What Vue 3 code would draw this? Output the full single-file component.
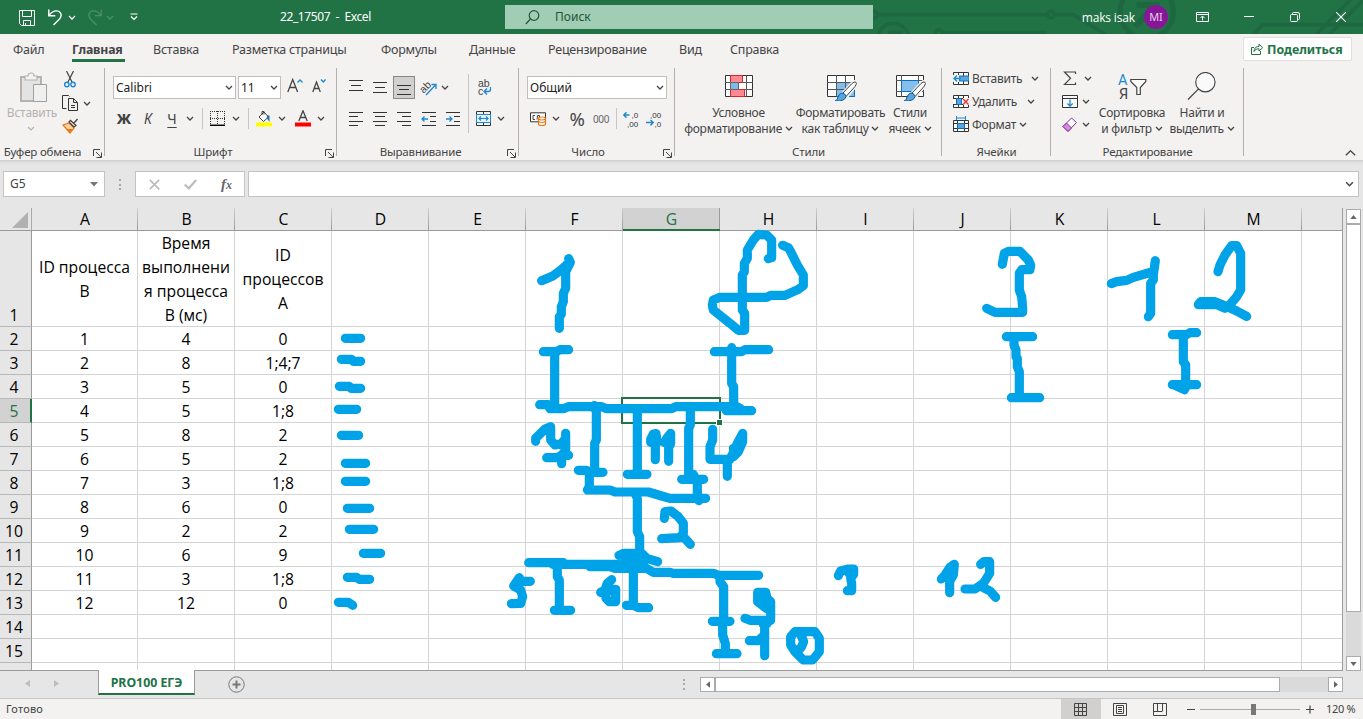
<script setup>
const tabs = ['Файл', 'Главная', 'Вставка', 'Разметка страницы', 'Формулы', 'Данные', 'Рецензирование', 'Вид', 'Справка']
const cols = ['A', 'B', 'C', 'D', 'E', 'F', 'G', 'H', 'I', 'J', 'K', 'L', 'M', '']
const data = [
  [['ID процесса', 'B'], ['Время', 'выполнени', 'я процесса', 'B (мс)'], ['ID', 'процессов', 'A']],
  [1, 4, '0'], [2, 8, '1;4;7'], [3, 5, '0'], [4, 5, '1;8'], [5, 8, '2'], [6, 5, '2'],
  [7, 3, '1;8'], [8, 6, '0'], [9, 2, '2'], [10, 6, '9'], [11, 3, '1;8'], [12, 12, '0'],
]
const lines = (r, c) => {
  const v = data[r - 1]?.[c]
  return v === undefined ? [] : Array.isArray(v) ? v : [v]
}
const launch = 'M.5 7V.5H7M3 3l5 5M8.500 3.500v5h-5'
const chev = 'M1 1l3 3 3-3'
</script>

<template>
  <div class="app">
    <header class="title">
      <svg class="circuit" width="503" height="34" viewBox="0 0 1509 102">
        <g fill="none" stroke="#1e6841" stroke-width="11">
          <path d="M55 44H560M586 44H640L735 102M250 98H560M1175 110L1208 74H1509M1370 102L1475 -5M1410 102L1509 0" />
          <circle cx="42" cy="44" r="10" /><circle cx="573" cy="44" r="10" /><circle cx="237" cy="99" r="10" />
          <circle cx="100" cy="117" r="47" />
          <circle cx="860" cy="36" r="80" stroke-width="16" />
          <path d="M830 15H890V75M885 20L825 80" stroke-width="18" />
          <path d="M85 98H122V120" stroke-width="14" />
        </g>
      </svg>
      <div class="quick">
        <svg width="16" height="16" viewBox="0 0 16 16" fill="none" stroke="#fff"><path d="M.5 .5h15v15h-13l-2-2zM3.500 .5v6h9v-6M4.500 15.500v-5h7v5M6.500 13v2" /></svg>
        <svg width="15" height="17" viewBox="0 0 15 17" fill="none" stroke="#fff" stroke-width="1.400"><path d="M.8 .5v6.200h6.500M1 6.500C5 .5 11 .8 12.800 4.500c1.200 3-.5 5-3 7.200L5.500 16" /></svg>
        <svg class="c1" width="8" height="5" viewBox="0 0 8 5" fill="none" stroke="#fff" stroke-width="1.300"><path :d="chev" /></svg>
        <svg width="15" height="17" viewBox="0 0 15 17" fill="none" stroke="#4b8f69" stroke-width="1.300"><path d="M14.200 .5v6.200H7.700M14 6.500C10 .5 4 .8 2.200 4.500c-1.200 3 .5 5 3 7.200L9.500 16" /></svg>
        <svg class="c1" width="8" height="5" viewBox="0 0 8 5" fill="none" stroke="#4b8f69" stroke-width="1.300"><path :d="chev" /></svg>
        <svg width="8" height="8" viewBox="0 0 8 8" fill="none" stroke="#fff" stroke-width="1.200"><path d="M.5 1h7M1 3.500l3 3 3-3" /></svg>
      </div>
      <div class="doc">22_17507&nbsp; -&nbsp; Excel</div>
      <div class="search">
        <svg width="15" height="15" viewBox="0 0 15 15" fill="none" stroke="#1d5636" stroke-width="1.200"><circle cx="9" cy="5.500" r="4.800" /><path d="M5.500 9L.8 14" /></svg>
        <span>Поиск</span>
      </div>
      <div class="user">maks isak</div>
      <div class="avatar">MI</div>
      <svg class="w1" width="13" height="10" viewBox="0 0 13 10" fill="none" stroke="#fff"><path d="M.5 .5h12v9H.5zM.5 2.500h12M6.500 8.500V4.500M4.500 6l2-2 2 2" /></svg>
      <svg class="w2" width="10" height="10" viewBox="0 0 10 10" stroke="#fff"><path d="M0 4.500h10" /></svg>
      <svg class="w3" width="10" height="10" viewBox="0 0 10 10" fill="none" stroke="#fff"><rect x=".5" y="2.500" width="7" height="7" rx="1" /><path d="M2.500 2V1.500q0-1 1-1H8q1.500 0 1.500 1.500v4.500q0 1-1 1" /></svg>
      <svg class="w4" width="10" height="10" viewBox="0 0 10 10" stroke="#fff" stroke-width="1.100"><path d="M0 0l10 10M10 0L0 10" /></svg>
    </header>

    <nav class="tabs">
      <span v-for="t in tabs" :key="t" class="tab" :class="{ on: t === 'Главная' }"><b>{{ t }}</b></span>
      <button class="share">
        <svg width="12" height="12" viewBox="0 0 12 12" fill="none" stroke="#217346"><path d="M3 4.500H.5v7h9V8M3 8.500c0-3.500 2-5 5-5V1l3.500 3.800L8 8V5.800C5.500 5.800 4 6.500 3 8.500z" /></svg>
        <span>Поделиться</span>
      </button>
    </nav>

    <section class="ribbon">
      <!-- Clipboard -->
      <div class="group g1">
        <div class="body">
          <div class="paste">
            <svg width="30" height="31" viewBox="0 0 30 31"><path d="M2 5h20v24H2z" fill="#e3e3e3" stroke="#b5b3b1" stroke-width="2" /><path d="M6 8V4h3c0-4 6-4 6 0h3v4z" fill="#f3f2f1" stroke="#b5b3b1" stroke-width="1.200" /><path d="M14.500 12.500h13v17h-13z" fill="#f0f0f0" stroke="#a19f9d" /></svg>
            <span>Вставить</span>
            <svg width="8" height="5" viewBox="0 0 8 5" fill="none" stroke="#b5b3b1" stroke-width="1.200"><path :d="chev" /></svg>
          </div>
          <div class="clip">
            <svg width="12" height="17" viewBox="0 0 12 17" fill="none" stroke="#444"><path d="M2.500 0L8 11M9.500 0L4 11" stroke-width="1.200" /><circle cx="2.800" cy="13.500" r="2.200" stroke="#1e88d0" stroke-width="1.400" /><circle cx="9" cy="13.500" r="2.200" stroke="#1e88d0" stroke-width="1.400" /></svg>
            <div class="copy">
              <svg width="17" height="16" viewBox="0 0 17 16" fill="none" stroke="#333"><path d="M4.500 13.500h-4V.5h6l1 1M6.500 3.500h5l4 4v8h-9zM11.500 3.500v4h4M9 10.500h4M9 12.500h4" /></svg>
              <svg width="8" height="5" viewBox="0 0 8 5" fill="none" stroke="#444" stroke-width="1.300"><path :d="chev" /></svg>
            </div>
            <svg width="17" height="16" viewBox="0 0 17 16"><path d="M1 7l6-2 5 5-4 5z" fill="#fbd3a5" stroke="#e8750f" stroke-width="1.200" /><path d="M4 11l4 3 3-3" fill="#e8750f" /><path d="M7 4l5 5 2-1.500L8.500 2.500zM12 5l3.500-4" fill="#fff" stroke="#444" stroke-width="1.300" /></svg>
          </div>
        </div>
        <footer><span>Буфер обмена</span><svg class="launch" width="9" height="9" viewBox="0 0 9 9"><path :d="launch" /></svg></footer>
      </div>

      <!-- Font -->
      <div class="group g2">
        <div class="body col">
          <div class="r1">
            <div class="combo cf"><span>Calibri</span><svg width="8" height="5" viewBox="0 0 8 5"><path :d="chev" /></svg></div>
            <div class="combo cs"><span>11</span><svg width="8" height="5" viewBox="0 0 8 5"><path :d="chev" /></svg></div>
            <svg class="big" width="16" height="15" viewBox="0 0 16 15" fill="none"><path d="M.8 14L5.700 1.500 10.600 14M2.500 9.500h6.500" stroke="#444" stroke-width="1.300" /><path d="M10.500 4.500L13 2l2.500 2.500" stroke="#1e88d0" stroke-width="1.300" /></svg>
            <svg class="small" width="14" height="15" viewBox="0 0 14 15" fill="none"><path d="M.8 14L4.500 4 8.300 14M2 10.500h5" stroke="#444" stroke-width="1.300" /><path d="M9 1.500L11.300 4l2.200-2.500" stroke="#1e88d0" stroke-width="1.300" /></svg>
          </div>
          <div class="r2">
            <span class="bold">Ж</span><span class="ital">К</span><span class="und">Ч</span>
            <svg class="ch" width="8" height="5" viewBox="0 0 8 5"><path :d="chev" /></svg><i class="sep"></i>
            <svg width="15" height="15" viewBox="0 0 15 15" fill="none" stroke="#333"><path d="M.5 0v13M14.500 0v13M0 .5h15M7.500 0v13M0 7.500h15" stroke-dasharray="1 1" /><path d="M0 14.300h15" stroke-width="1.500" stroke="#000" /></svg>
            <svg class="ch" width="8" height="5" viewBox="0 0 8 5"><path :d="chev" /></svg><i class="sep"></i>
            <svg width="16" height="17" viewBox="0 0 16 17"><path d="M3 7l5-5 4.500 5L7.500 11.500zM6 5V1.500h2v3" fill="#fafafa" stroke="#444" /><path d="M11 5.500h2.500V12L10.800 8z" fill="#1e6fb0" /><path d="M0 12.500h16v4H0z" fill="#ff0" /></svg>
            <svg class="ch" width="8" height="5" viewBox="0 0 8 5"><path :d="chev" /></svg>
            <svg width="16" height="17" viewBox="0 0 16 17"><path d="M3.800 11L8 .8 12.200 11M5.300 7.500h5.400" fill="none" stroke="#444" stroke-width="1.300" /><path d="M0 12.500h16v4H0z" fill="#f00" /></svg>
            <svg class="ch" width="8" height="5" viewBox="0 0 8 5"><path :d="chev" /></svg>
          </div>
        </div>
        <footer><span>Шрифт</span><svg class="launch" width="9" height="9" viewBox="0 0 9 9"><path :d="launch" /></svg></footer>
      </div>

      <!-- Alignment -->
      <div class="group g3">
        <div class="body">
          <div class="align">
            <svg class="ln up" width="14" height="11" viewBox="0 0 14 11"><path d="M0 .5h14M2 5.500h10M0 10.500h14" /></svg>
            <svg class="ln" width="14" height="11" viewBox="0 0 14 11"><path d="M0 .5h14M2 5.500h10M0 10.500h14" /></svg>
            <div class="sel"><svg class="ln" width="14" height="10" viewBox="0 0 14 10"><path d="M0 .5h14M2 4.500h10M0 9.500h14" /></svg></div>
            <svg width="18" height="17" viewBox="0 0 18 17"><text x="0" y="12" transform="rotate(-45 5 9)" class="abt">ab</text><path d="M6 16L16 5.500M11.500 5.500h4.500v4.500" fill="none" stroke="#1e88d0" stroke-width="1.300" /></svg>
            <svg class="ch" width="8" height="5" viewBox="0 0 8 5"><path :d="chev" /></svg>
            <svg class="ln" width="14" height="14" viewBox="0 0 14 14"><path d="M0 .5h14M0 4.500h9M0 9.500h14M0 13.500h9" /></svg>
            <svg class="ln" width="14" height="14" viewBox="0 0 14 14"><path d="M0 .5h14M2 4.500h10M0 9.500h14M2 13.500h10" /></svg>
            <svg class="ln" width="14" height="14" viewBox="0 0 14 14"><path d="M0 .5h14M5 4.500h9M0 9.500h14M5 13.500h9" /></svg>
            <svg class="ln" width="14" height="14" viewBox="0 0 14 14"><path d="M0 .5h14M8 4.500h6M8 9.500h6M0 13.500h14" /><path class="blue" d="M0 7h6M2.500 4.500L0 7l2.500 2.500" /></svg>
            <svg class="ln" width="14" height="14" viewBox="0 0 14 14"><path d="M0 .5h14M8 4.500h6M8 9.500h6M0 13.500h14" /><path class="blue" d="M0 7h6M3.500 4.500L6 7 3.500 9.500" /></svg>
          </div>
          <i class="sep tall"></i>
          <div class="wrap">
            <svg width="14" height="17" viewBox="0 0 14 17"><text x="0" y="7.500" class="abc">ab</text><text x="0" y="16" class="abc">c</text><path d="M12.500 8v2.500q0 2-2 2H6.500M9 9.500l-3 3 3 3" fill="none" stroke="#1e88d0" stroke-width="1.300" /></svg>
            <div class="merge">
              <svg width="15" height="15" viewBox="0 0 15 15" fill="none"><path d="M.5 .5h14v14H.5zM7.500 0v3M7.500 12v3" stroke="#333" /><path d="M.5 3.500h14v8H.5z" fill="#e9f3fb" stroke="#1e88d0" /><path d="M3 7.500h9M5 5.500l-2 2 2 2M10 5.500l2 2-2 2" stroke="#1e88d0" stroke-width="1.200" /></svg>
              <svg class="ch" width="8" height="5" viewBox="0 0 8 5"><path :d="chev" /></svg>
            </div>
          </div>
        </div>
        <footer><span>Выравнивание</span><svg class="launch" width="9" height="9" viewBox="0 0 9 9"><path :d="launch" /></svg></footer>
      </div>

      <!-- Number -->
      <div class="group g4">
        <div class="body col">
          <div class="combo cn"><span>Общий</span><svg width="8" height="5" viewBox="0 0 8 5"><path :d="chev" /></svg></div>
          <div class="num">
            <svg width="17" height="14" viewBox="0 0 17 14"><path d="M.5 .8h15v9H.5z" fill="#fff" stroke="#333" /><path d="M5 3.500H3v4h2M7 7.500l.5-4h2v3" fill="none" stroke="#444" /><path d="M8.500 6.500c0-2 7-2 7 0V12c0 2-7 2-7 0z" fill="#fff" stroke="#e8750f" stroke-width="1.200" /><path d="M8.500 7q3.500 2 7 0M8.500 9.500q3.500 2 7 0" fill="none" stroke="#e8750f" stroke-width="1.200" /></svg>
            <svg class="ch" width="8" height="5" viewBox="0 0 8 5"><path :d="chev" /></svg>
            <span class="pct">%</span><span class="ooo">000</span><i class="sep"></i>
            <svg width="16" height="16" viewBox="0 0 16 16"><text x="8.500" y="6.500" class="dz">,0</text><text x="4" y="15.500" class="dz">,00</text><path d="M6.500 4H.8M3.500 1.300L.8 4l2.700 2.700" fill="none" stroke="#1e88d0" stroke-width="1.400" /></svg>
            <svg width="16" height="16" viewBox="0 0 16 16"><text x="4" y="6.500" class="dz">,00</text><text x="8.500" y="15.500" class="dz">,0</text><path d="M0 11.500h7M4.500 9l2.700 2.500L4.500 14.500" fill="none" stroke="#1e88d0" stroke-width="1.400" /></svg>
          </div>
        </div>
        <footer><span>Число</span><svg class="launch" width="9" height="9" viewBox="0 0 9 9"><path :d="launch" /></svg></footer>
      </div>

      <!-- Styles -->
      <div class="group g5">
        <div class="body">
          <div class="large l1">
            <svg width="30" height="29" viewBox="0 0 30 29"><path d="M1.500 3.500h27v21h-27z" fill="#fff" stroke="#333" /><path d="M6.500 3v22M22.500 3v22M1 10.500h28M1 17.500h28M14.500 3v22" stroke="#555" fill="none" /><path d="M6.500 3.500h12v7h-12zM6.500 17.500h14v7h-14z" fill="#ff8a92" stroke="#d6262d" /><path d="M6.500 10.500h8v7h-8z" fill="#7db9ea" stroke="#666" /></svg>
            <span>Условное</span>
            <span>форматирование <svg class="ch" width="8" height="5" viewBox="0 0 8 5"><path :d="chev" /></svg></span>
          </div>
          <div class="large l2">
            <svg width="32" height="29" viewBox="0 0 32 29"><path d="M2.500 3.500h27v21h-27z" fill="#fff" stroke="#333" /><path d="M11.500 10.500h18v14h-18z" fill="#83beec" stroke="#0a6fc0" /><path d="M11.500 3v22M20.500 3v22M2 10.500h28M2 17.500h28" stroke="#555" fill="none" /><path d="M31.500 9.500q1.500 1-.5 4l-9 11-4-3.500 9-10q3-2.500 4.500-1.500z" fill="#fff" stroke="#f3f2f1" stroke-width="3" /><path d="M30.800 10.200q1.500 1-.5 4l-9 10-3.500-3 9-9.500q2.500-2.500 4-1.500z" fill="#fff" stroke="#444" /><path d="M17 21q3 0 4 3.500-1 5-11 4.500 3-1 3-4 1-3.500 4-4z" fill="#5ba5dd" stroke="#0a5ea8" /></svg>
            <span>Форматировать</span>
            <span>как таблицу <svg class="ch" width="8" height="5" viewBox="0 0 8 5"><path :d="chev" /></svg></span>
          </div>
          <div class="large l3">
            <svg width="32" height="29" viewBox="0 0 32 29"><path d="M2.500 3.500h27v21h-27z" fill="#fff" stroke="#333" /><path d="M7.500 3v22M24.500 3v22M2 8.500h28M2 19.500h28" stroke="#555" fill="none" /><path d="M7.500 8.500h17v11h-17z" fill="#83beec" stroke="#0a6fc0" /><path d="M31.500 9.500q1.500 1-.5 4l-9 11-4-3.500 9-10q3-2.500 4.500-1.500z" fill="#fff" stroke="#f3f2f1" stroke-width="3" /><path d="M30.800 10.200q1.500 1-.5 4l-9 10-3.500-3 9-9.500q2.500-2.500 4-1.500z" fill="#fff" stroke="#444" /><path d="M17 21q3 0 4 3.500-1 5-11 4.500 3-1 3-4 1-3.500 4-4z" fill="#5ba5dd" stroke="#0a5ea8" /></svg>
            <span>Стили</span>
            <span>ячеек <svg class="ch" width="8" height="5" viewBox="0 0 8 5"><path :d="chev" /></svg></span>
          </div>
        </div>
        <footer><span>Стили</span></footer>
      </div>

      <!-- Cells -->
      <div class="group g6">
        <div class="body col">
          <div class="line">
            <svg width="16" height="15" viewBox="0 0 16 15"><path d="M.5 4V1.500h15v12H.5V11M5.500 1v12M10.500 1v12M0 5.500h16M0 9.500h16" fill="#fff" stroke="#333" /><path d="M6 5h10v5H6z" fill="#5ba5dd" stroke="#0a6fc0" /><path d="M0 4h6v7H0z" fill="#f3f2f1" /><path d="M8 7.500H1M4 4.500l-3 3 3 3" fill="none" stroke="#1e88d0" stroke-width="1.400" /></svg>
            <span>Вставить</span><svg class="ch m1" width="8" height="5" viewBox="0 0 8 5"><path :d="chev" /></svg>
          </div>
          <div class="line">
            <svg width="16" height="15" viewBox="0 0 16 15"><path d="M.5 4V1.500h15v12H.5V11M5.500 1v12M10.500 1v12M0 4.500h16M0 10.500h16" fill="#fff" stroke="#333" /><path d="M3.500 4.500h5v6h-5z" fill="#5ba5dd" stroke="#0a6fc0" /><path d="M10 4h6v7h-6z" fill="#f3f2f1" /><path d="M10 5l5.500 5.500M15.500 5L10 10.500" stroke="#e8333a" stroke-width="1.400" /></svg>
            <span>Удалить</span><svg class="ch m2" width="8" height="5" viewBox="0 0 8 5"><path :d="chev" /></svg>
          </div>
          <div class="line">
            <svg width="16" height="17" viewBox="0 0 16 17"><path d="M.5 4.500h15v11H.5zM4.500 4v12M11.500 4v12M0 7.500h16M0 12.500h16" fill="#fff" stroke="#333" /><path d="M4.500 7.500h7v5h-7z" fill="#5ba5dd" stroke="#0a6fc0" /><path d="M3 0h10v4H3z" fill="#f3f2f1" /><path d="M3.500 0v4M12.500 0v4M4 2h8" fill="none" stroke="#1e88d0" /></svg>
            <span>Формат</span><svg class="ch m3" width="8" height="5" viewBox="0 0 8 5"><path :d="chev" /></svg>
          </div>
        </div>
        <footer><span>Ячейки</span></footer>
      </div>

      <!-- Editing -->
      <div class="group g7">
        <div class="body">
          <div class="edit">
            <svg width="16" height="15" viewBox="0 0 16 15" fill="none"><path d="M13.500 3V1H2.500l6 6.300-6 6.200h11v-2" stroke="#444" stroke-width="1.200" /></svg>
            <svg class="ch r" width="8" height="5" viewBox="0 0 8 5"><path :d="chev" /></svg>
            <svg width="16" height="15" viewBox="0 0 16 15" fill="none"><path d="M.5 1.500h15v12H.5zM.5 4.500h15" stroke="#333" fill="#fafafa" /><path d="M8 5.500v6.500M5.300 9.500L8 12l2.700-2.500" stroke="#1e88d0" stroke-width="1.300" /></svg>
            <svg class="ch" width="8" height="5" viewBox="0 0 8 5"><path :d="chev" /></svg>
            <svg width="16" height="16" viewBox="0 0 16 16"><path d="M1 9.500L9.500 1l5 4.500-8.500 9z" fill="#fff" stroke="#8c2fa0" /><path d="M1 9.500L4.500 6l5 5-3.500 3.500z" fill="#cf8fdc" stroke="#8c2fa0" /></svg>
            <svg class="ch" width="8" height="5" viewBox="0 0 8 5"><path :d="chev" /></svg>
          </div>
          <div class="large l4">
            <svg width="29" height="29" viewBox="0 0 29 29" fill="none"><text x="0" y="12.500" class="sa">А</text><text x="1" y="27" class="sy">Я</text><path d="M12.800 7.500h15v2l-5.500 6v7h-3.500v-7l-6-6z" stroke="#444" stroke-width="1.200" fill="#fafafa" /></svg>
            <span>Сортировка</span>
            <span>и фильтр <svg class="ch" width="8" height="5" viewBox="0 0 8 5"><path :d="chev" /></svg></span>
          </div>
          <div class="large l5">
            <svg width="30" height="30" viewBox="0 0 30 30"><circle cx="18.500" cy="10.500" r="10" fill="#fafafa" stroke="#444" stroke-width="1.200" /><path d="M11.500 17.500L.5 28.500" stroke="#444" stroke-width="1.300" /></svg>
            <span>Найти и</span>
            <span>выделить <svg class="ch" width="8" height="5" viewBox="0 0 8 5"><path :d="chev" /></svg></span>
          </div>
        </div>
        <footer><span>Редактирование</span></footer>
      </div>
      <svg class="collapse" width="11" height="6" viewBox="0 0 11 6" fill="none" stroke="#444" stroke-width="1.300"><path d="M.8 5.300L5.500 .8l4.700 4.500" /></svg>
    </section>

    <section class="fbar">
      <div class="name"><span>G5</span><svg width="8" height="5" viewBox="0 0 8 5"><path d="M0 0h8L4 4.500z" fill="#777" /></svg></div>
      <i class="dots"></i>
      <div class="fx">
        <svg width="11" height="11" viewBox="0 0 11 11" stroke="#bdbdbd" stroke-width="1.700"><path d="M.8 .8l9.500 9.500M10.200 .8L.8 10.200" /></svg>
        <svg width="13" height="11" viewBox="0 0 13 11" fill="none" stroke="#bdbdbd" stroke-width="2.200"><path d="M.8 5.500L4.800 9.300 12.200 1" /></svg>
        <em>f<small>x</small></em>
      </div>
      <div class="formula"><svg class="ch" width="9" height="6" viewBox="0 0 8 5"><path :d="chev" /></svg></div>
    </section>

    <main class="work">
      <div class="sheet">
        <div class="hrow">
          <div class="corner"><svg width="16" height="16" viewBox="0 0 16 16"><path d="M16 0v16H0z" fill="#b1b1b1" /></svg></div>
          <div v-for="(c, i) in cols" :key="i" class="hc" :class="{ a: i === 0, act: c === 'G', last: i === 13 }">{{ c }}</div>
        </div>
        <div v-for="r in 16" :key="r" class="row" :class="{ first: r === 1, part: r === 16 }">
          <div class="rh" :class="{ act: r === 5 }">{{ r < 16 ? r : '' }}</div>
          <div v-for="(c, i) in cols" :key="i" class="cell" :class="{ a: i === 0, last: i === 13 }">
            <span v-for="l in lines(r, i)" :key="l">{{ l }}</span>
          </div>
        </div>
        <svg class="ink" width="1342" height="462" viewBox="0 208 1342 462">
          <rect x="622" y="398" width="98" height="25" fill="none" stroke="#217346" stroke-width="2" />
          <rect x="716.500" y="419.500" width="6" height="6" fill="#217346" stroke="#fff" />
          <g class="pen">
            <g transform="translate(500 225) scale(.33333)">
              <path d="M125 167L160 152 185 133 208 112M206 101L211 112 197 140V190L190 205V230L184 245V268L178 275V310" />
              <path d="M805 101L815 98V45L800 30 775 28 760 45 742 75V100L733 115V140L727 150V255L734 265V316H715L690 295 640 255 637 240 640 225 660 217H800L812 211H855L895 193 910 182V150L892 120 872 80 865 68 848 61" />
              <path d="M130 380H170L180 374H206M164 380V540M643 380H725L735 374H806M695 368V475L701 485V540" />
              <path d="M119 539H145L150 551H190L205 545H305L320 551H515L527 545H700M679 557H755M701 540L720 550M283 542V550" />
            </g>
            <g transform="translate(500 390) scale(.33333)">
              <path d="M289 50V150L284 160V235M235 241H260L270 247H309M268 250V290L262 300H330L345 306H445L465 312 485 318 510 325H617" />
              <path d="M412 60V250M382 253H441M571 55V105L566 115V260M545 268H611M580 253L592 275V310L597 332" />
              <path d="M107 154V145L135 117 152 110V150L165 165 185 160 197 145V130M197 145V180L185 196V221M140 203H170L185 196H206" />
              <path d="M452 157V148L460 132 468 131 466 160V209M494 158L500 145 512 130V160L506 172V214M470 140V160M508 140V165" />
              <path d="M638 118V150L630 170V208H690L700 188 712 160 728 130V155L715 185 700 200M682 208V259M700 175L715 180" />
              <path d="M405 310L412 325V425L419 440V490M357 496L370 490H425L440 505 473 515" />
              <path d="M86 518H190M158 523H380M270 530H330L345 535H440L460 547H510L520 550H640L655 556H776M370 505L430 512V530H360" />
              <path d="M172 530V560L178 570V655M163 661H212M400 540V645M379 646H400L415 653H446" />
              <path d="M660 560V575L671 590V680L668 700V735L676 760V780M637 694H690M649 791H711" />
              <path d="M91 574H60L58 563 41 588 62 600 68 620 62 640 34 641" />
              <path d="M335 569L322 580 315 600 302 607M318 600V625L328 635H347V598L330 597M318 605L335 600" />
              <path d="M773 607H797L801 625 812 635V685L800 702 790 703M773 607V635L800 656M788 620L800 645M735 685L750 691H812M794 691V797M748 752H775L794 735" />
              <path d="M885 725H945L958 745V785L938 810H910L885 785 872 765V740L885 725M903 735L911 755 905 770 892 785" />
              <path d="M493 385L495 365 513 363 535 380 550 400V430L540 443 485 446M550 440L571 463" />
            </g>
            <g transform="translate(820 225) scale(.33333)">
              <path d="M547 118L553 85 565 79H600L625 105 632 120 630 134H605L598 145V195L605 215 608 250V262H525L500 250" />
              <path d="M874 176L890 170 920 166 940 157 985 144 1000 140M1006 107L1000 150V165L992 175V265L985 275" />
              <path d="M1194 140L1200 120 1215 90 1235 62H1250L1262 85V195L1250 215 1232 236M1135 239L1142 230H1185L1215 242 1250 258 1280 274M1135 239H1190L1215 250" />
              <path d="M559 335H638M582 340V360L588 375V395L592 400V425L598 440V515M574 518H659M1057 329H1100L1110 323H1130M1090 335V410L1097 420V480M1057 479H1130M1065 481L1093 494 1098 485" />
              <path d="M55 1052L62 1038 85 1032H101V1048L92 1060 95 1075V1097H82M80 1035L95 1055" />
              <path d="M364 1062L375 1050 390 1027 403 1018 400 1050 389 1068V1103M380 1055L395 1040M482 1018L492 1010H509V1045L490 1075 465 1092H435M490 1088L510 1098 527 1117" />
            </g>
            <g transform="translate(320 320) scale(.33333)">
              <path d="M76 55H122M64 118H95L100 124H122M58 199H88L93 205H122M55 268H110M64 346H116M76 430H137M76 484H137M82 565H149M88 628H161M130 700H182M82 772H110L118 778H149M55 847H85L98 856" />
            </g>
          </g>
        </svg>
      </div>
      <div class="vbar">
        <div class="sb"><svg width="7" height="4" viewBox="0 0 8 5"><path d="M0 5h8L4 0z" /></svg></div>
        <div class="vthumb"></div><div class="vtrack"></div>
        <div class="sb"><svg width="7" height="4" viewBox="0 0 8 5"><path d="M0 0h8L4 5z" /></svg></div>
      </div>
    </main>

    <section class="sheets">
      <div class="arrows"><svg width="5" height="7" viewBox="0 0 5 7"><path d="M5 0v7L0 3.500z" /></svg><svg width="5" height="7" viewBox="0 0 5 7"><path d="M0 0v7l5-3.500z" /></svg></div>
      <div class="stab">PRO100 ЕГЭ</div>
      <svg class="plus" width="17" height="17" viewBox="0 0 17 17" fill="none" stroke="#777"><circle cx="8.500" cy="8.500" r="7.700" /><path d="M8.500 4.500v8M4.500 8.500h8" stroke-width="2" /></svg>
      <i class="dots"></i>
      <div class="hbar">
        <div class="sb"><svg width="4" height="7" viewBox="0 0 5 8"><path d="M5 0v8L0 4z" /></svg></div>
        <div class="hthumb"></div><div class="htrack"></div>
        <div class="sb"><svg width="4" height="7" viewBox="0 0 5 8"><path d="M0 0v8l5-4z" /></svg></div>
      </div>
    </section>

    <footer class="status">
      <span class="ready">Готово</span>
      <div class="view on"><svg width="13" height="13" viewBox="0 0 13 13"><path d="M.5 .5h12v12H.5zM4.500 0v13M8.500 0v13M0 4.500h13M0 8.500h13" /></svg></div>
      <div class="view"><svg width="14" height="13" viewBox="0 0 14 13"><path d="M.5 .5h13v12H.5zM3.500 2.500h7v8h-7zM5 4.500h4M5 6.500h4M5 8.500h4" /></svg></div>
      <div class="view"><svg width="14" height="13" viewBox="0 0 14 13"><path d="M.5 .5h13v12H.5zM4.500 0v8M9.500 0v8M.5 8.500h9" /></svg></div>
      <div class="zoom">
        <svg width="127" height="11" viewBox="0 0 127 11"><path d="M0 5.500h8M119 5.500h8M123 1.500v8" stroke="#444" stroke-width="1.200" /><path d="M13 5.500h100" stroke="#aaa" /><path d="M64 0h5v11h-5z" fill="#777" /></svg>
        <span>120 %</span>
      </div>
    </footer>
  </div>
</template>

<style>
body { background: #e6e6e6; overflow: hidden; }
</style>

<style scoped>
* { box-sizing: border-box; }
.app { width: 1363px; height: 719px; display: flex; flex-direction: column; overflow: hidden; background: #e6e6e6; color: #444; font: 12px/16px "Noto Sans", "Open Sans", sans-serif; }
svg { flex: none; display: block; }
.title { height: 34px; flex: none; background: #217346; position: relative; display: flex; align-items: center; color: #fff; }
.circuit { position: absolute; right: 0; top: 0; }
.title > :not(.circuit) { position: relative; }
.quick { display: flex; align-items: center; width: 280px; padding-left: 19px; gap: 4px; }
.quick svg:nth-child(1) { margin-right: 9px; margin-top: 2px; }
.quick svg:nth-child(2) { margin-right: 1px; }
.quick svg:nth-child(3) { margin-right: 7px; }
.quick svg:nth-child(5) { margin-right: 12px; }
.doc { width: 225px; font-size: 12px; letter-spacing: -.4px; white-space: nowrap; }
.search { width: 368px; height: 24px; background: #a0cdb4; display: flex; align-items: center; padding-left: 20px; gap: 15px; color: #1d5636; }
.user { width: 271px; padding-right: 9px; text-align: right; font: 12px/16px "Open Sans", sans-serif; margin-top: 2px; letter-spacing: -.15px; }
.avatar { width: 24px; height: 24px; border-radius: 50%; background: #881798; font-size: 11px; line-height: 24px; text-align: center; color: #e8d0ee; }
.w1 { margin-left: 28px; } .w2 { margin-left: 35px; } .w3 { margin-left: 36px; } .w4 { margin-left: 36px; }

.tabs { height: 32px; flex: none; background: #f3f2f1; display: grid; grid-template-columns: 59px 81px 79px 149px 88px 79px 131px 51px 513px auto; padding-left: 13px; }
.tab { white-space: nowrap; padding-top: 7px; font-size: 12.500px; line-height: 17px; letter-spacing: -.22px; }
.tab b { font-weight: 400; display: inline-block; height: 21px; }
.tab.on b { font-weight: 700; width: 53px; border-bottom: 3px solid #217346; letter-spacing: -.15px; font-size: 12.300px; }
.share { width: 109px; height: 24px; margin-top: 3px; background: #fff; border: 1px solid #e1dfdd; border-radius: 2px; display: flex; align-items: center; gap: 4px; padding: 0 0 0 7px; color: #217346; font: 700 12.400px "Noto Sans", sans-serif; white-space: nowrap; }

.ribbon { height: 99px; flex: none; display: flex; background: linear-gradient(#f3f2f1 0 94px, #cdcdcd 94px, #e2e2e2 97px, #e6e6e6); letter-spacing: -.25px; }
.group { height: 94px; padding-top: 2px; display: flex; flex-direction: column; background: linear-gradient(#b3b0ad, #b3b0ad) 100% 2px / 1px 88px no-repeat; }
.g1 { width: 105px; } .g2 { width: 232px; } .g3 { width: 182px; } .g4 { width: 156px; } .g5 { width: 267px; } .g6 { width: 109px; } .g7 { width: 193px; }
.body { height: 76px; flex: none; display: flex; }
.body.col { flex-direction: column; }
.group footer { height: 16px; display: flex; font-size: 11.500px; line-height: 16px; letter-spacing: -.17px; justify-content: center; position: relative; white-space: nowrap; }
.launch { position: absolute; right: 3px; top: 5px; fill: none; stroke: #444; }
.g1 footer { padding-right: 20px; } .g2 footer { padding-right: 16px; } .g3 footer { padding-right: 15px; } .g4 footer { padding-right: 18px; }
.ch, .combo svg { fill: none; stroke: #444; stroke-width: 1.300; }
.sep { width: 1px; height: 21px; background: #c8c6c4; }
.paste { width: 62px; padding-top: 4px; display: flex; flex-direction: column; align-items: center; color: #b5b3b1; }
.paste svg:first-child { margin-left: 6px; }
.paste span { line-height: 16px; margin: 2px 0 5px 2px; }
.clip { padding-top: 3px; display: flex; flex-direction: column; gap: 7px; }
.clip > svg:first-child { margin-left: 2px; }
.copy { display: flex; align-items: center; gap: 4px; }
.g2 .body, .g4 .body { padding: 8px 0 0 8px; }
.combo { height: 23px; border: 1px solid #c0bebc; background: #fff; color: #222; display: flex; align-items: center; justify-content: space-between; padding: 0 2px; letter-spacing: 0; }
.cf { width: 123px; } .cs { width: 43px; margin-left: 2px; } .cn { width: 140px; }
.r1 { display: flex; }
.big { margin: 2px 0 0 6px; } .small { margin: 2px 0 0 9px; }
.r2 { height: 21px; margin-top: 9px; display: grid; grid-template-columns: 22px 26px 22px 14px 11px 19px 17px 9px 22px 14px 28px 7px; place-items: center; }
.r2 span { font-size: 14px; line-height: 18px; letter-spacing: 0; }
.bold { font-weight: 800; } .ital { font-style: italic; } .und { text-decoration: underline; text-underline-offset: 3px; }
.ln { fill: none; stroke: #333; stroke-width: 1.100; } .ln .blue { stroke: #1e88d0; stroke-width: 1.300; }
.align { padding: 8px 0 0 7px; display: grid; grid-template-columns: 24px 24px 24px 25px 23px; grid-template-rows: 23px 43px; place-items: center; }
.align > :nth-child(n+6) { align-self: start; margin-top: 13px; }
.align .up { margin-top: -5px; }
.align svg, .wrap svg, .num svg { overflow: visible; }
.align .ch { justify-self: start; margin-left: 0; }
.sel { width: 22px; height: 23px; border: 1px solid #8a8886; background: #d2d0ce; display: grid; place-items: center; padding-top: 5px; }
.abt, .abc { font: 10.500px "Liberation Sans", sans-serif; fill: #444; letter-spacing: 0; }
.dz { font: 8px "Liberation Sans", sans-serif; fill: #333; letter-spacing: 0; }
.tall { height: 59px; margin: 6px 0 0 4px; }
.wrap { padding: 11px 0 0 7px; display: flex; flex-direction: column; gap: 15px; }
.wrap > svg { margin-left: 2px; }
.merge { display: flex; align-items: center; gap: 6px; }
.num { margin-top: 9px; height: 21px; display: grid; grid-template-columns: 22px 14px 28px 20px 10px 20px 26px; place-items: center; }
.pct { font-size: 18.500px; line-height: 20px; } .ooo { font-size: 10px; color: #666; letter-spacing: -.4px; }
.large { display: flex; flex-direction: column; align-items: center; white-space: nowrap; padding-top: 4px; }
.large > svg { height: 29px; margin-bottom: 4px; }
.large .ch { display: inline-block; vertical-align: 2px; }
.l1 { width: 127px; } .l2 { width: 77px; } .l3 { width: 62px; }
.g6 .body { padding: 0 0 0 11px; margin-top: -1px; margin-bottom: 1px; }
.line { height: 23px; display: flex; align-items: center; gap: 3px; }
.m1 { margin-left: 6px; } .m2 { margin-left: 7px; } .m3 { margin-left: 0; }
.edit { width: 41px; margin-top: -1px; padding: 0 0 0 11px; display: grid; grid-template-columns: 20px 8px; grid-template-rows: 23px 23px 23px; align-items: center; }
.edit .r { margin-left: 2px; }
.l4 { width: 80px; } .l5 { width: 60px; }
.sa, .sy { font: 14.500px Roboto, sans-serif; fill: #1e88d0; letter-spacing: 0; } .sy { fill: #444; }
.collapse { margin: 84px 0 0 101px; }

.fbar { height: 43px; flex: none; padding-top: 6px; display: flex; background: #e6e6e6; }
.name, .fx, .formula { height: 26px; background: #fff; border: 1px solid #c3c3c3; display: flex; align-items: center; }
.name { width: 102px; margin-left: 3px; padding: 0 6px; justify-content: space-between; }
.dots { width: 2px; height: 11px; margin: 8px 14px 0; background: repeating-linear-gradient(#a8a8a8 0 2px, transparent 2px 4.500px); }
.fx { width: 110px; padding-left: 13px; }
.fx svg:nth-child(2) { margin-left: 24px; }
.fx em { font: italic bold 15px/18px "Liberation Serif", serif; margin-left: 24px; color: #666; } .fx small { font-size: 12px; }
.formula { width: 1111px; margin-left: 3px; justify-content: flex-end; padding-right: 4px; }

.work { height: 463px; flex: none; display: flex; }
.sheet { width: 1343px; height: 463px; position: relative; overflow: hidden; border-right: 1px solid #9b9b9b; border-bottom: 1px solid #9b9b9b; background: #fff; color: #000; font: 15.700px/24px "Open Sans", sans-serif; }
.hrow { height: 23px; display: flex; background: #e6e6e6; border-bottom: 1px solid #9b9b9b; }
.corner { width: 32px; flex: none; padding: 4px 0 0 12px; border-right: 1px solid #ababab; }
.hc { width: 97px; flex: none; height: 22px; line-height: 22px; text-align: center; background: linear-gradient(#cfcfcf, #9b9b9b) right / 1px 100% no-repeat; }
.hc.act { background: linear-gradient(#9b9b9b, #9b9b9b) right / 1px 100% no-repeat, #d2d2d2; color: #217346; height: 23px; border-bottom: 2px solid #217346; }
.a { width: 106px !important; }
.row { height: 24px; display: flex; }
.row.first { height: 96px; }
.rh { width: 32px; flex: none; background: #e6e6e6; border-right: 1px solid #9b9b9b; border-bottom: 1px solid #b8b8b8; display: flex; align-items: flex-end; justify-content: center; padding-right: 3px; line-height: 21px; }
.rh.act { background: #d2d2d2; color: #217346; border-right: 2px solid #217346; padding-right: 2px; }
.cell { width: 97px; flex: none; border-right: 1px solid #d4d4d4; border-bottom: 1px solid #d4d4d4; display: flex; flex-direction: column; justify-content: center; align-items: center; white-space: nowrap; }
.last { width: 40px; border-right: 0; background-image: none; }
.ink { position: absolute; left: 0; top: 0; }
.pen { fill: none; stroke: #00a2e8; stroke-width: 27.500; stroke-linecap: round; stroke-linejoin: round; }
.vbar { width: 20px; padding: 1px 2px 0 3px; display: flex; flex-direction: column; }
.sb { width: 15px; height: 15px; flex: none; border: 1px solid #ababab; background: #fff; display: grid; place-items: center; }
.sb svg { fill: #666; }
.vthumb { height: 388px; border: 1px solid #ababab; background: #fff; width: 15px; }
.vtrack { height: 44px; background: #dadada; width: 15px; }

.sheets { height: 28px; flex: none; display: flex; border-bottom: 1px solid #c6c6c6; }
.arrows { width: 98px; display: flex; gap: 24px; padding: 9px 0 0 25px; fill: #bdbdbd; }
.stab { width: 97px; height: 25px; margin-top: -1px; position: relative; background: #fff; border: 1px solid #9b9b9b; border-top: 0; border-bottom: 2px solid #217346; color: #217346; font-weight: 700; font-size: 12.300px; text-align: center; line-height: 26px; }
.plus { margin: 5px 0 0 33px; }
.sheets .dots { margin: 8px 15px 0 438px; }
.hbar { display: flex; margin-top: 6px; }
.hthumb { width: 565px; height: 15px; border: 1px solid #ababab; background: #fff; } .htrack { width: 48px; height: 15px; background: #dadada; }
.status { height: 20px; flex: none; background: #f3f2f1; display: flex; font-size: 11px; line-height: 20px; }
.ready { width: 1061px; padding-left: 6px; letter-spacing: .2px; }
.view { width: 40px; padding-right: 2px; display: grid; place-items: center; fill: none; stroke: #444; } .view.on { background: #d2d0ce; }
.zoom { display: flex; align-items: center; margin-left: 6px; gap: 12px; white-space: nowrap; letter-spacing: -.3px; }
</style>
